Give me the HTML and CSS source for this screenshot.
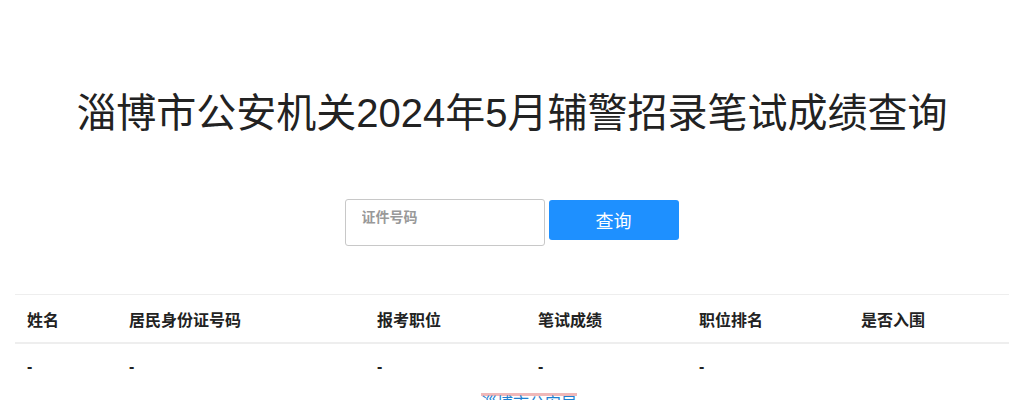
FILE: index.html
```html
<!DOCTYPE html>
<html lang="zh-CN">
<head>
<meta charset="utf-8">
<title>淄博市公安机关2024年5月辅警招录笔试成绩查询</title>
<link rel="stylesheet" href="styles.css">
</head>
<body>
<div class="page">
  <h1 class="title">淄博市公安机关2024年5月辅警招录笔试成绩查询</h1>
  <form class="search">
    <input class="search-input" type="text" placeholder="证件号码">
    <button class="search-btn" type="button">查询</button>
  </form>
  <table class="result">
    <thead>
      <tr>
        <th class="c1">姓名</th>
        <th class="c2">居民身份证号码</th>
        <th class="c3">报考职位</th>
        <th class="c4">笔试成绩</th>
        <th class="c5">职位排名</th>
        <th class="c6">是否入围</th>
      </tr>
    </thead>
    <tbody>
      <tr>
        <td>-</td>
        <td>-</td>
        <td>-</td>
        <td>-</td>
        <td>-</td>
        <td></td>
      </tr>
    </tbody>
  </table>
  <div class="footer"><a class="footer-link" href="#">淄博市公安局</a></div>
</div>
</body>
</html>
```
FILE: styles.css
```css
html, body {
  margin: 0;
  padding: 0;
  background: #fff;
}
body {
  font-family: "Liberation Sans", "Noto Sans CJK SC", sans-serif;
  color: #333;
}
.page {
  padding: 0 15px;
}
.title {
  margin: 0;
  padding-top: 88px;
  font-size: 40px;
  line-height: 50px;
  font-weight: normal;
  text-align: center;
  color: #222;
}
.search {
  display: flex;
  justify-content: center;
  align-items: flex-start;
  gap: 4px;
  margin-top: 61px;
  margin-left: -1px;
}
.search-input {
  box-sizing: border-box;
  width: 200px;
  height: 47px;
  border: 1px solid #c8c8c8;
  border-radius: 3px;
  padding: 0 16px 12px;
  font-size: 14px;
  font-family: inherit;
  outline: none;
}
.search-input::placeholder {
  color: #999;
  font-weight: bold;
}
.search-btn {
  box-sizing: border-box;
  width: 130px;
  height: 40px;
  margin-top: 1px;
  border: none;
  border-radius: 3px;
  background: #1e90ff;
  color: #fff;
  font-size: 18px;
  font-family: inherit;
}
.result {
  width: 994px;
  margin-top: 48px;
  border-collapse: collapse;
  border-top: 1px solid #eee;
  font-size: 16px;
}
.result th {
  text-align: left;
  font-weight: bold;
  color: #222;
  padding: 0 12px;
  height: 47px;
  border-bottom: 2px solid #eee;
}
.result td {
  padding: 0 12px;
  height: 46px;
  color: #222;
  font-weight: bold;
}
.c1 { width: 78px; }
.c2 { width: 224px; }
.c3 { width: 137px; }
.c4 { width: 137px; }
.c5 { width: 138px; }
.footer {
  text-align: center;
  margin-top: 3px;
  margin-left: 34px;
  line-height: 16px;
}
.footer-link {
  display: inline-block;
  color: #1e7fd0;
  font-size: 16px;
  line-height: 16px;
  text-decoration: none;
  border-top: 3px solid #f0b8b8;
}
```
